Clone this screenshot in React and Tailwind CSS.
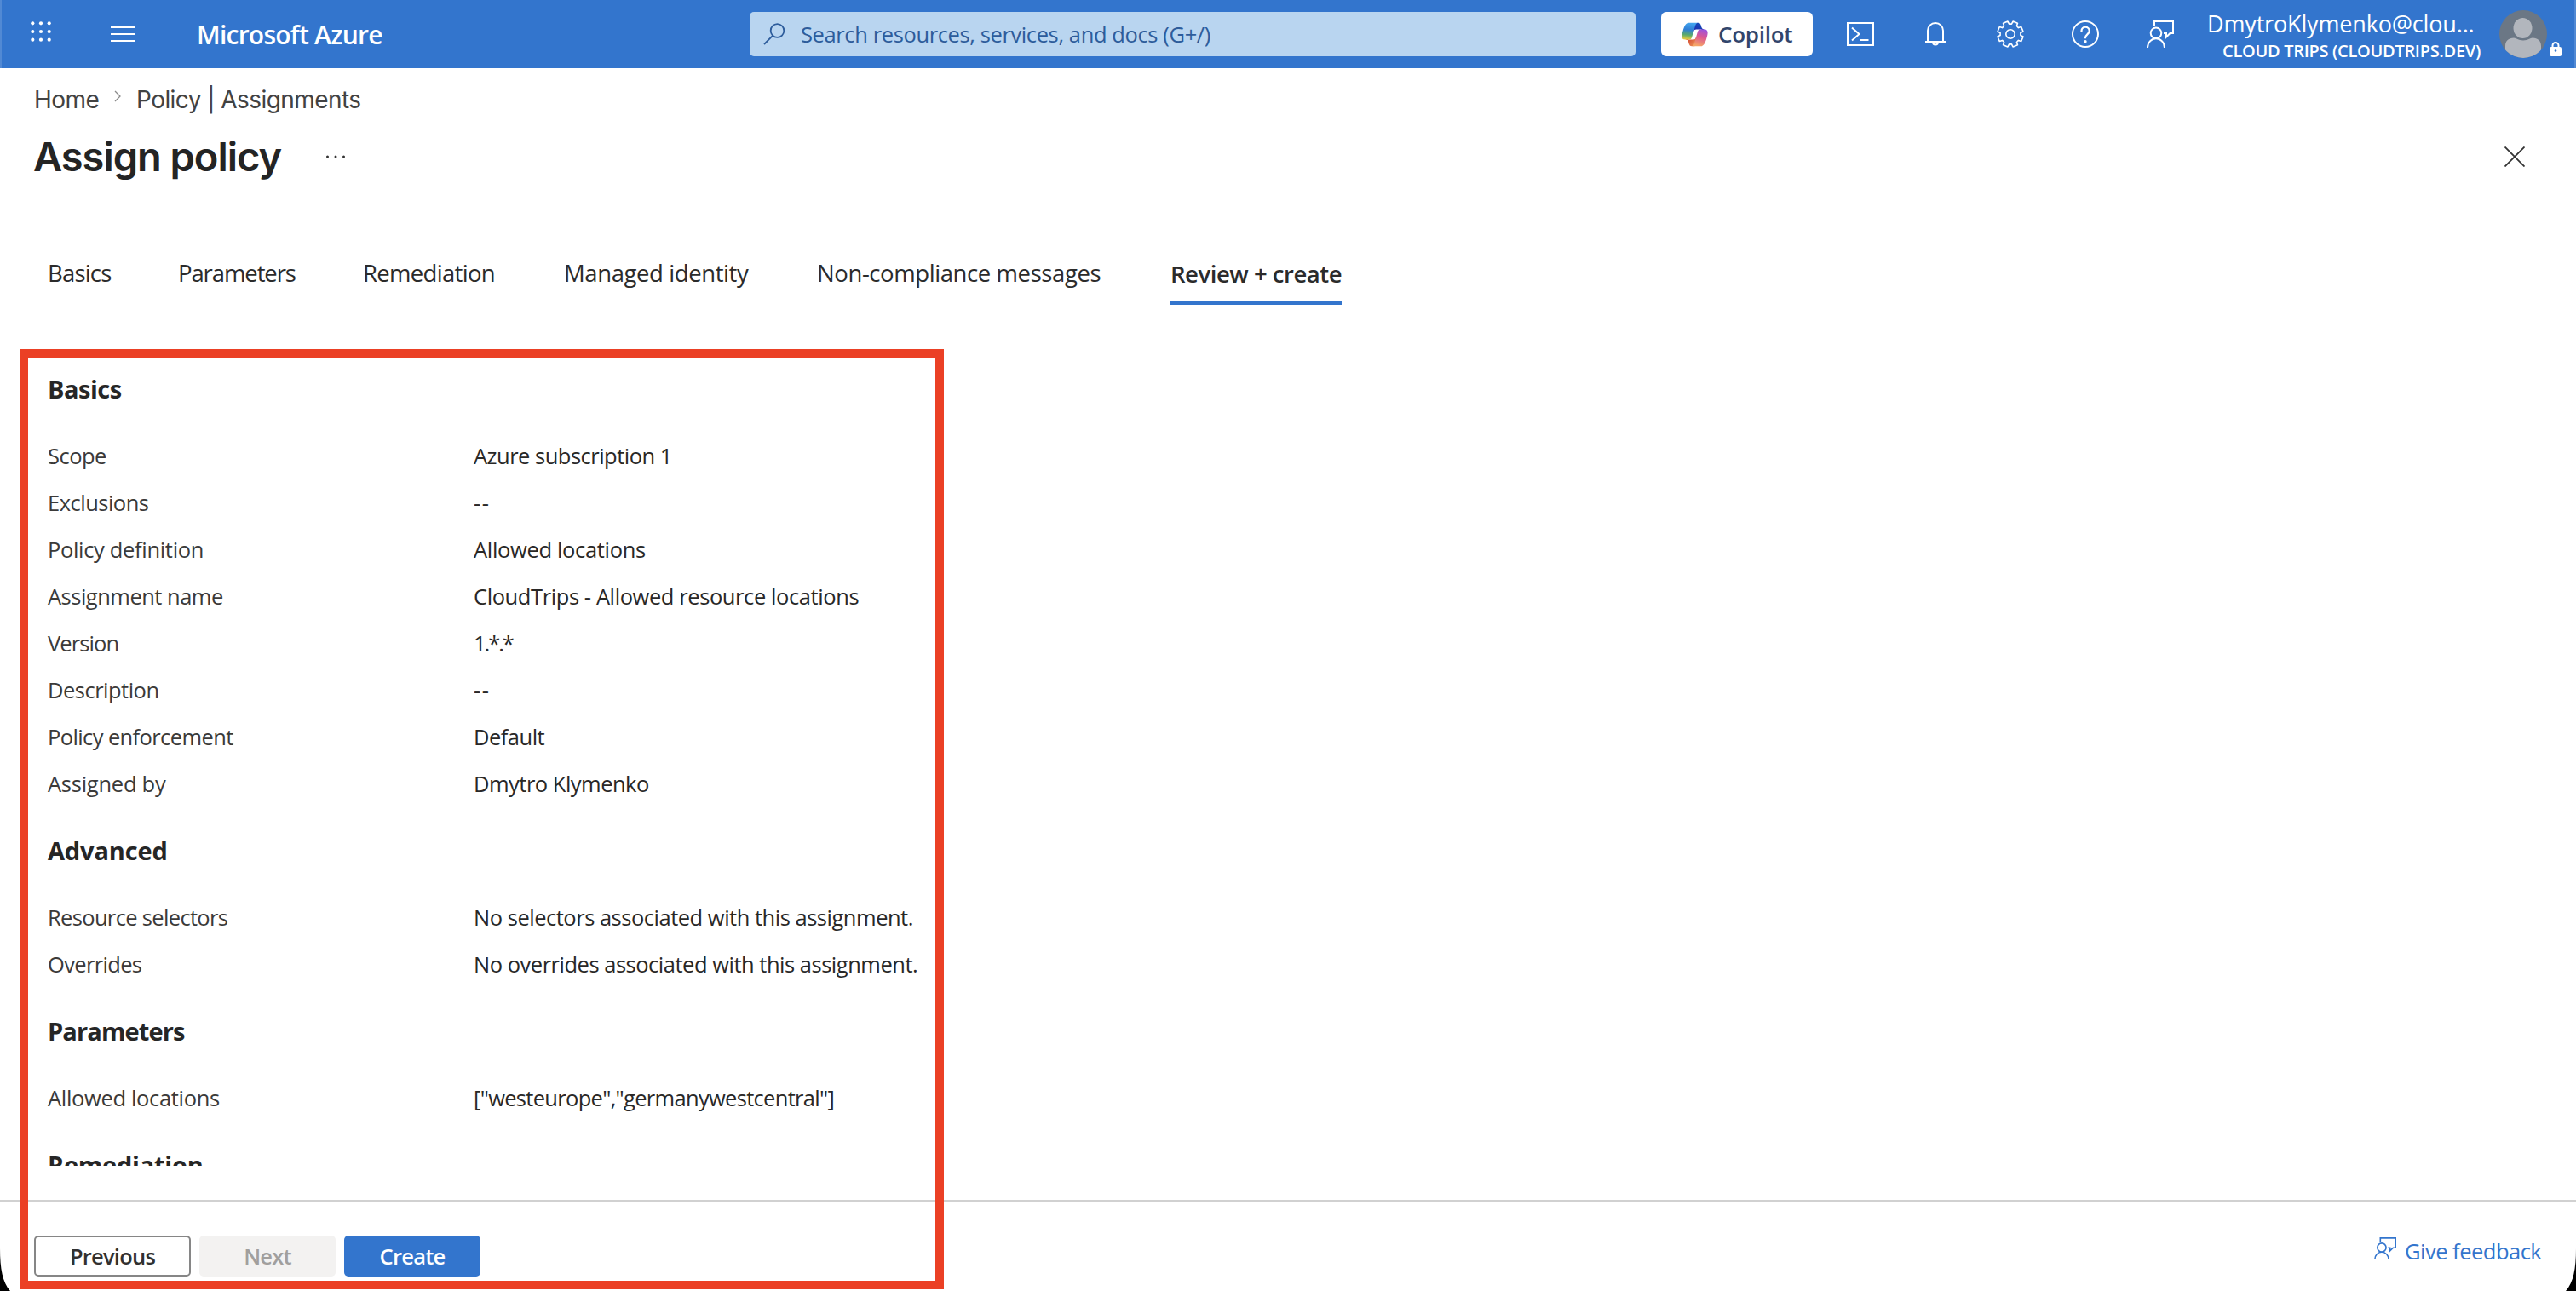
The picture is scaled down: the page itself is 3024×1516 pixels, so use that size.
import { useId } from 'react'

const TABS = [
  { label: 'Basics', width: 'w-[153px]', tracking: 'tracking-[-0.03em]' },
  { label: 'Parameters', width: 'w-[217px]', tracking: 'tracking-[-0.04em]' },
  { label: 'Remediation', width: 'w-[236px]', tracking: 'tracking-[-0.025em]' },
  { label: 'Managed identity', width: 'w-[297px]', tracking: 'tracking-[-0.015em]' },
  { label: 'Non-compliance messages', width: 'w-[415px]', tracking: 'tracking-[-0.015em]' },
]

const SECTIONS = [
  {
    title: 'Basics',
    rows: [
      { label: 'Scope', value: 'Azure subscription 1' },
      { label: 'Exclusions', value: '--', valueClass: 'tracking-[0.06em]' },
      { label: 'Policy definition', value: 'Allowed locations', labelClass: 'tracking-[-0.013em]', valueClass: 'tracking-[-0.013em]' },
      { label: 'Assignment name', value: 'CloudTrips - Allowed resource locations', valueClass: 'tracking-[-0.016em]' },
      { label: 'Version', value: '1.*.*', labelClass: 'tracking-[-0.035em]', valueClass: 'tracking-[-0.08em]' },
      { label: 'Description', value: '--', valueClass: 'tracking-[0.06em]' },
      { label: 'Policy enforcement', value: 'Default', labelClass: 'tracking-[-0.024em]' },
      { label: 'Assigned by', value: 'Dmytro Klymenko', labelClass: 'tracking-[-0.01em]' },
    ],
  },
  {
    title: 'Advanced',
    titleClass: 'tracking-[-0.005em]',
    rows: [
      { label: 'Resource selectors', value: 'No selectors associated with this assignment.', labelClass: 'tracking-[-0.026em]', valueClass: 'tracking-[-0.019em]' },
      { label: 'Overrides', value: 'No overrides associated with this assignment.', labelClass: 'tracking-[-0.026em]', valueClass: 'tracking-[-0.019em]' },
    ],
  },
  {
    title: 'Parameters',
    titleClass: 'tracking-[-0.03em]',
    rows: [
      { label: 'Allowed locations', value: '["westeurope","germanywestcentral"]', labelClass: 'tracking-[-0.013em]', valueClass: 'tracking-[-0.027em]' },
    ],
  },
  { title: 'Remediation', titleClass: 'tracking-[-0.008em]', rows: [] },
]

const gearPoints = () => {
  const pts = []
  for (let i = 0; i < 8; i++) {
    const mid = 22.5 + i * 45
    for (const [r, off] of [[12, -15.5], [15.3, -11], [15.3, 11], [12, 15.5]]) {
      const a = ((mid + off) * Math.PI) / 180
      pts.push(`${(16 + r * Math.cos(a)).toFixed(2)},${(16 + r * Math.sin(a)).toFixed(2)}`)
    }
  }
  return pts.join(' ')
}

const ShellIcon = () => (
  <svg width="32" height="28" viewBox="0 0 32 28" fill="none" stroke="currentColor" strokeWidth="2">
    <path d="M1 1h30v26H1z" />
    <path d="M6 6.500l8.500 7.500L6 21.500M16 21h9.500" />
  </svg>
)

const BellIcon = () => (
  <svg width="24" height="28" viewBox="0 0 24 28" fill="none" stroke="currentColor" strokeWidth="2">
    <path d="M3 23V10a9 9 0 0 1 18 0v13M0 23h24M9 23.500a3 3 0 0 0 6 0" />
  </svg>
)

const GearIcon = () => (
  <svg width="32" height="32" viewBox="0 0 32 32" fill="none" stroke="currentColor" strokeWidth="1.600" strokeLinejoin="round">
    <polygon points={gearPoints()} />
    <circle cx="16" cy="16" r="5.200" />
  </svg>
)

const HelpIcon = () => (
  <svg width="32" height="32" viewBox="0 0 32 32" fill="none" stroke="currentColor" strokeWidth="2">
    <circle cx="16" cy="16" r="15" />
    <path d="M11.500 13v-.8a4.600 4.600 0 0 1 9.200 0c0 4-4.700 4.300-4.700 8.300v.8" strokeWidth="2.200" />
    <circle cx="16" cy="24.700" r="1.700" fill="currentColor" stroke="none" />
  </svg>
)

const FeedbackIcon = ({ size }) => (
  <svg width={size} height={size} viewBox="0 0 32 32" fill="none" stroke="currentColor" strokeWidth="2">
    <path d="M9 6V1h22v14h-3.500L23 19.500V15h-3" />
    <circle cx="11" cy="14.800" r="6.300" />
    <path d="M1 32c0-6 4.500-10.800 10-10.800S21 26 21 32" />
  </svg>
)

const CopilotLogo = () => {
  const id = useId()
  return (
    <svg width="33" height="33" viewBox="0 0 48 48">
      <defs>
        <linearGradient id={`${id}a`} x1="30" y1="5" x2="24" y2="16" gradientUnits="userSpaceOnUse">
          <stop offset="0" stopColor="#1447b8" />
          <stop offset="1" stopColor="#1e2fb0" />
        </linearGradient>
        <linearGradient id={`${id}b`} x1="14" y1="34" x2="24" y2="44" gradientUnits="userSpaceOnUse">
          <stop offset="0" stopColor="#d8563a" />
          <stop offset="1" stopColor="#ee9355" />
        </linearGradient>
        <linearGradient id={`${id}c`} x1="14" y1="4" x2="11" y2="33" gradientUnits="userSpaceOnUse">
          <stop offset="0" stopColor="#43a5ee" />
          <stop offset="0.400" stopColor="#2f7fd6" />
          <stop offset="0.720" stopColor="#5cab6b" />
          <stop offset="1" stopColor="#f0cd3c" />
        </linearGradient>
        <linearGradient id={`${id}d`} x1="38" y1="15" x2="30" y2="44" gradientUnits="userSpaceOnUse">
          <stop offset="0" stopColor="#9b52e0" />
          <stop offset="0.450" stopColor="#dc5791" />
          <stop offset="1" stopColor="#f6a765" />
        </linearGradient>
      </defs>
      <path fill={`url(#${id}a)`} d="M34.142 7.325A4.630 4.630 0 0 0 29.700 4H28.350a4.630 4.630 0 0 0-4.554 3.794L21.480 20.407l.575-1.965a4.630 4.630 0 0 1 4.444-3.330h7.853l3.294 1.282 3.175-1.283h-.926a4.630 4.630 0 0 1-4.443-3.325z" />
      <path fill={`url(#${id}b)`} d="M14.330 40.656A4.630 4.630 0 0 0 18.779 44h2.870a4.630 4.630 0 0 0 4.629-4.510l.312-12.163-.654 2.233a4.630 4.630 0 0 1-4.443 3.329h-7.919l-2.823-1.532-3.057 1.532h.912a4.630 4.630 0 0 1 4.448 3.344z" />
      <path fill={`url(#${id}c)`} d="M29.500 4H13.460c-4.583 0-7.332 6.057-9.165 12.113C2.123 23.290-.720 32.888 7.503 32.888h6.925a4.630 4.630 0 0 0 4.456-3.358a2077 2077 0 0 1 4.971-17.156c.843-2.843 1.544-5.284 2.621-6.805C27.080 4.717 28.086 4 29.501 4z" />
      <path fill={`url(#${id}d)`} d="M18.498 44h16.040c4.582 0 7.332-6.058 9.165-12.115 2.171-7.177 5.013-16.775-3.208-16.775h-6.926a4.630 4.630 0 0 0-4.455 3.358a2084 2084 0 0 1-4.972 17.160c-.842 2.842-1.543 5.283-2.620 6.805-.604.850-1.610 1.567-3.024 1.567z" />
    </svg>
  )
}

const Avatar = () => (
  <div className="relative w-[72px] h-[56px]">
    <div className="w-[56px] h-[56px] rounded-full overflow-hidden bg-[#6b7785]">
      <svg width="56" height="56" viewBox="0 0 56 56" fill="#b2b6bd">
        <path d="M7 56V42c0-6 4-9.500 10-9.500 3 0 5 3 11 3s8-3 11-3c6 0 10 3.500 10 9.500v14z" />
        <ellipse cx="27.500" cy="21" rx="11" ry="12" />
      </svg>
    </div>
    <svg className="absolute left-[59px] top-[37px]" width="14" height="17" viewBox="0 0 14 17">
      <path d="M3.500 7V4.500a3.500 3.500 0 0 1 7 0V7" fill="none" stroke="#fff" strokeWidth="2" />
      <rect y="6" width="14" height="11" rx="2" fill="#fff" />
      <circle cx="7" cy="10.500" r="1.300" fill="#3375cd" />
    </svg>
  </div>
)

const TopBar = () => (
  <header className="flex h-20 shrink-0 items-center border-x-2 border-[#5189d4] bg-[#3375cd] text-white">
    <svg className="ml-[34px] mb-[6px]" width="24" height="24" viewBox="0 0 24 24" fill="currentColor">
      {[2.3, 12, 21.7].map((y) => [2.3, 12, 21.7].map((x) => <circle key={`${x}-${y}`} cx={x} cy={y} r="2.100" />))}
    </svg>
    <svg className="ml-[70px]" width="28" height="18" viewBox="0 0 28 18" stroke="currentColor" strokeWidth="2">
      <path d="M0 1h28M0 9h28M0 17h28" />
    </svg>
    <div className="ml-[73px] w-[649px] pt-px text-[30px] leading-[80px] font-semibold tracking-[-0.025em]">Microsoft Azure</div>
    <div className="flex h-[52px] w-[1040px] items-center rounded-[5px] bg-[#b9d5f0] pl-4 text-[#2d5c9b]">
      <svg width="26" height="26" viewBox="0 0 26 26" fill="none" stroke="currentColor" strokeWidth="1.800">
        <circle cx="16.500" cy="9" r="7.800" />
        <path d="M11 14.800L1 25" />
      </svg>
      <span className="ml-[18px] text-[25.500px] tracking-[-0.015em]">Search resources, services, and docs (G+/)</span>
    </div>
    <button className="ml-[30px] flex h-[52px] w-[178px] items-center rounded-md bg-white pl-[23px] text-[#32456b]">
      <CopilotLogo />
      <span className="ml-[11px] pt-px text-[26px] font-semibold tracking-[-0.01em]">Copilot</span>
    </button>
    <nav className="ml-[12px] flex">
      {[ShellIcon, BellIcon, GearIcon, HelpIcon].map((Icon, i) => (
        <span key={i} className="flex h-8 w-[88px] items-center justify-center"><Icon /></span>
      ))}
      <span className="flex h-8 w-[88px] items-center justify-center"><FeedbackIcon size={32} /></span>
    </nav>
    <div className="ml-[11px] w-[324px] shrink-0 pt-[2px] whitespace-nowrap">
      <div className="text-[27px] leading-[36px] tracking-[-0.006em]">DmytroKlymenko@clou...</div>
      <div className="pl-[18px] text-[20px] leading-[27px] font-semibold tracking-[-0.015em]">CLOUD TRIPS (CLOUDTRIPS.DEV)</div>
    </div>
    <div className="ml-[19px]"><Avatar /></div>
  </header>
)

const PageTitle = () => (
  <div className="px-10 pt-[19px] font-['Inter',sans-serif]">
    <div className="flex h-9 items-center text-[28px] text-[#424242]">
      <span className="w-[93px] tracking-[-0.02em]">Home</span>
      <svg className="mb-2 mr-[17px]" width="10" height="14" viewBox="0 0 10 14" fill="none" stroke="#8a8a8a" strokeWidth="1.300">
        <path d="M2 1l6 6-6 6" />
      </svg>
      <span className="tracking-[-0.02em]">Policy | Assignments</span>
    </div>
    <div className="mt-[19px] flex h-[60px] items-center">
      <h1 className="-ml-px w-[343px] text-[47px] leading-[60px] font-semibold tracking-[-0.022em] text-[#242424]">Assign policy</h1>
      <svg width="24" height="4" viewBox="0 0 24 4" fill="#333">
        <circle cx="2.500" cy="2" r="1.500" />
        <circle cx="12" cy="2" r="1.500" />
        <circle cx="21.500" cy="2" r="1.500" />
      </svg>
      <svg className="ml-auto mr-[20px]" width="24" height="24" viewBox="0 0 24 24" stroke="#333" strokeWidth="1.800">
        <path d="M.5.500l23 23M23.500.500l-23 23" />
      </svg>
    </div>
  </div>
)

const Tabs = () => (
  <nav className="mt-[87px] flex h-[57px] pl-[56px] text-[27.500px] leading-10 text-[#2b2b2b]">
    {TABS.map((t) => (
      <span key={t.label} className={`shrink-0 whitespace-nowrap ${t.width} ${t.tracking}`}>{t.label}</span>
    ))}
    <span className="w-[201px] whitespace-nowrap border-b-4 border-[#3375cd] pt-px font-semibold tracking-[-0.017em]">Review + create</span>
  </nav>
)

const Summary = () => (
  <main className="mt-[48px] h-[963px] shrink-0 overflow-hidden pl-[56px] text-[25.500px] tracking-[-0.02em]">
    {SECTIONS.map((s) => (
      <section key={s.title}>
        <h2 className={`py-[31px] text-[29px] leading-10 font-bold text-[#262626] ${s.titleClass || ''}`}>{s.title}</h2>
        {s.rows.map((r) => (
          <div key={r.label} className="flex h-[55px] items-center">
            <span className={`w-[500px] text-[#3b3a39] ${r.labelClass || ''}`}>{r.label}</span>
            <span className={`text-[#292827] ${r.valueClass || ''}`}>{r.value}</span>
          </div>
        ))}
      </section>
    ))}
  </main>
)

const Footer = () => (
  <footer className="mt-10 flex grow items-start border-t-2 border-[#d1d1d1] pt-10 pl-10 pr-[41px] text-[25.500px]">
    <button className="h-12 w-[184px] rounded-[5px] border-2 border-[#868686] bg-white pt-px font-semibold tracking-[-0.03em] text-[#323130]">Previous</button>
    <button className="ml-[10px] h-12 w-[160px] rounded-[5px] bg-[#f3f2f1] pt-px font-semibold tracking-[-0.03em] text-[#a19f9d]">Next</button>
    <button className="ml-[10px] h-12 w-[160px] rounded-[5px] bg-[#3375cd] pt-px font-semibold tracking-[-0.03em] text-white">Create</button>
    <a className="ml-auto flex h-9 items-center text-[#3375cd]">
      <span className="mb-[6px]"><FeedbackIcon size={26} /></span>
      <span className="ml-[10px] w-[160px] whitespace-nowrap pt-px tracking-[-0.02em]">Give feedback</span>
    </a>
  </footer>
)

const App = () => (
  <div className="relative flex h-[1516px] w-[3024px] flex-col overflow-hidden bg-white font-['Open_Sans',sans-serif]">
    <TopBar />
    <PageTitle />
    <Tabs />
    <Summary />
    <Footer />
    <div className="pointer-events-none absolute top-[410px] left-[23px] h-[1104px] w-[1085px] border-10 border-[#eb4025]" />
    <svg className="absolute bottom-0 left-0" width="12" height="50" viewBox="0 0 12 50"><path d="M0 0c0 24 3 40 12 50H0z" /></svg>
    <svg className="absolute right-0 bottom-0" width="12" height="50" viewBox="0 0 12 50"><path d="M12 0c0 24-3 40-12 50h12z" /></svg>
  </div>
)

export default App
